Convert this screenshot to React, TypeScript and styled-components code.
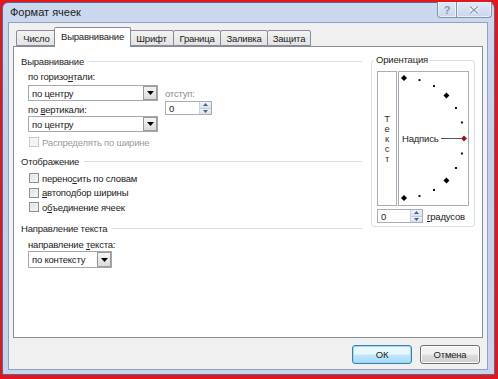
import React from 'react';
import styled, { createGlobalStyle } from 'styled-components';

const Global = createGlobalStyle`
  html, body { margin: 0; padding: 0; background: #fff; }
  body { font-family: "Liberation Sans", Arial, sans-serif; font-size: 9.5px; letter-spacing: -0.2px; color: #222; }
  * { box-sizing: border-box; }
`;

const Screen = styled.div`
  width: 498px;
  height: 379px;
  background: #e4161c;
  padding: 2px 3px 4px 2px;
  display: flex;
`;

const Window = styled.div`
  flex: 1;
  display: flex;
  flex-direction: column;
  background: linear-gradient(#cbd9f0, #c0cfea 40%, #c6d4ee);
  border: 1px solid #56698a;
  border-radius: 6px 6px 0 0;
  padding: 0 6px 4px 5px;
`;

const TitleBar = styled.div`
  height: 19px;
  display: flex;
  justify-content: space-between;
  align-items: flex-start;
  margin-right: -4px;
`;

const Title = styled.div`
  font-size: 11px;
  letter-spacing: 0;
  line-height: 19px;
  padding-left: 2px;
  color: #1a1a1a;
`;

const CaptionButtons = styled.div`
  display: flex;
  margin-top: -1px;
`;

const CaptionButton = styled.div<{ $w: number; $first?: boolean }>`
  width: ${p => p.$w}px;
  height: 16px;
  display: flex;
  align-items: center;
  justify-content: center;
  border: 1px solid #8093b3;
  border-top: none;
  border-left: ${p => (p.$first ? '1px solid #8093b3' : 'none')};
  border-radius: ${p => (p.$first ? '0 0 0 4px' : '0 0 4px 0')};
  background: linear-gradient(#e2eaf7, #c9d6ec);
  box-shadow: inset 0 0 0 1px rgba(255, 255, 255, 0.6);
  color: #8696b0;
  font-size: 11px;
  font-weight: bold;
`;

const Client = styled.div`
  flex: 1;
  display: flex;
  flex-direction: column;
  background: #f0f0f0;
  border: 1px solid #8ea2c0;
  padding: 4px 4px 0 4px;
`;

const TabRow = styled.div`
  display: flex;
  align-items: flex-end;
  padding-left: 3px;
  height: 19px;
`;

const Tab = styled.div<{ $w: number; $active?: boolean }>`
  width: ${p => p.$w}px;
  height: ${p => (p.$active ? 20 : 16)}px;
  margin: ${p => (p.$active ? '0 -2px -1px -2px' : '0 -1px 0 0')};
  position: relative;
  z-index: ${p => (p.$active ? 2 : 1)};
  border: 1px solid #898c95;
  border-bottom: ${p => (p.$active ? 'none' : '1px solid #898c95')};
  border-radius: 2px 2px 0 0;
  background: ${p => (p.$active ? '#ffffff' : 'linear-gradient(#f3f3f3, #e3e3e3)')};
  display: flex;
  align-items: center;
  justify-content: center;
  padding-bottom: ${p => (p.$active ? 2 : 0)}px;
`;

const Panel = styled.div`
  height: 292px;
  background: #fff;
  border: 1px solid #898c95;
  display: flex;
  padding: 8px 5px 0 6px;
  gap: 9px;
`;

const LeftColumn = styled.div`
  width: 342px;
  display: flex;
  flex-direction: column;
`;

const SectionHeader = styled.div<{ $mt?: number }>`
  display: flex;
  align-items: center;
  height: 12px;
  margin-top: ${p => p.$mt ?? 0}px;
  &::after {
    content: '';
    flex: 1;
    height: 1px;
    background: #d5dfe5;
    margin-left: 5px;
  }
`;

const HeaderText = styled.span`
  padding-left: 1px;
  color: #1e1e1e;
`;

const SectionBody = styled.div`
  padding-left: 8px;
  display: flex;
  flex-direction: column;
`;

const AlignGrid = styled.div`
  display: flex;
  gap: 7px;
`;

const Column = styled.div<{ $w?: number; $pt?: number }>`
  display: flex;
  flex-direction: column;
  width: ${p => (p.$w ? `${p.$w}px` : 'auto')};
  padding-top: ${p => p.$pt ?? 0}px;
`;

const Label = styled.div<{ $mt?: number; $disabled?: boolean }>`
  line-height: 12px;
  height: 12px;
  margin-top: ${p => p.$mt ?? 0}px;
  color: ${p => (p.$disabled ? '#8a8a8a' : '#222')};
  white-space: nowrap;
`;

const SelectBox = styled.div<{ $w: number; $h?: number; $mt?: number }>`
  width: ${p => p.$w}px;
  height: ${p => p.$h ?? 16}px;
  margin-top: ${p => p.$mt ?? 0}px;
  border: 1px solid #a3a8b1;
  background: #fff;
  display: flex;
  align-items: stretch;
`;

const SelectValue = styled.div`
  flex: 1;
  padding-left: 3px;
  display: flex;
  align-items: center;
`;

const DropButton = styled.div`
  width: 14px;
  border: 1px solid #9a9a9a;
  background: linear-gradient(#f5f5f5, #dcdcdc);
  display: flex;
  align-items: center;
  justify-content: center;
`;

const Spinner = styled.div<{ $w: number; $mt?: number }>`
  width: ${p => p.$w}px;
  height: 14px;
  margin-top: ${p => p.$mt ?? 0}px;
  border: 1px solid #abadb3;
  background: #fff;
  display: flex;
`;

const SpinValue = styled.div`
  flex: 1;
  padding-left: 3px;
  display: flex;
  align-items: center;
`;

const SpinButtons = styled.div`
  width: 12px;
  display: flex;
  flex-direction: column;
  border-left: 1px solid #c9d3df;
`;

const SpinHalf = styled.div`
  flex: 1;
  display: flex;
  align-items: center;
  justify-content: center;
  background: linear-gradient(#eef3f9, #d8e2ee);
  & + & { border-top: 1px solid #c0cad8; }
`;

const CheckRow = styled.div<{ $mt?: number; $h?: number; $disabled?: boolean }>`
  display: flex;
  align-items: center;
  gap: 3px;
  height: ${p => p.$h ?? 14}px;
  margin-top: ${p => p.$mt ?? 0}px;
  padding-left: 1px;
  color: ${p => (p.$disabled ? '#9a9a9a' : '#222')};
  white-space: nowrap;
`;

const CheckBox = styled.span<{ $disabled?: boolean }>`
  width: 10px;
  height: 10px;
  flex: none;
  border: 1px solid ${p => (p.$disabled ? '#c8c8c8' : '#8e8f8f')};
  background: ${p => (p.$disabled ? '#f4f4f4' : 'linear-gradient(135deg, #dcdcdc, #fafafa)')};
  box-shadow: inset 0 0 0 1px ${p => (p.$disabled ? '#f7f7f7' : '#f0f0f0')};
`;

const OrientGroup = styled.fieldset`
  width: 104px;
  height: 173px;
  margin: -1px 0 0 0;
  padding: 0 5px 0 5px;
  border: 1px solid #d5dfe5;
  border-radius: 3px;
  display: flex;
  flex-direction: column;
`;

const Legend = styled.legend`
  padding: 0 2px;
  margin-left: -3px;
  line-height: 12px;
  color: #1e1e1e;
`;

const OrientRow = styled.div`
  display: flex;
  gap: 1px;
  margin-top: 5px;
  height: 135px;
`;

const VerticalBox = styled.div`
  width: 20px;
  border: 1px solid #a9adb5;
  display: flex;
  flex-direction: column;
  align-items: center;
  justify-content: center;
  line-height: 10px;
  padding-top: 1px;
  color: #333;
`;

const ArcBox = styled.div`
  width: 71px;
  border: 1px solid #a9adb5;
  display: flex;
`;

const DegreeRow = styled.div`
  display: flex;
  align-items: center;
  gap: 4px;
  margin-top: 3px;
`;

const Footer = styled.div`
  display: flex;
  justify-content: flex-end;
  gap: 8px;
  padding: 7px 3px 0 0;
`;

const DialogButton = styled.div<{ $default?: boolean }>`
  width: 60px;
  height: 19px;
  border: 1px solid ${p => (p.$default ? '#3c7fb1' : '#707070')};
  border-radius: 3px;
  background: ${p => (p.$default ? 'linear-gradient(#eaf6fd 45%, #bee6fd 55%, #a7d9f5)' : 'linear-gradient(#f2f2f2 45%, #ebebeb 50%, #dddddd 55%, #cfcfcf)')};
  box-shadow: inset 0 0 0 1px ${p => (p.$default ? '#96d9f9' : '#fcfcfc')};
  display: flex;
  align-items: center;
  justify-content: center;
`;

const DownArrow = () => (
  <svg width="7" height="4" viewBox="0 0 7 4"><path d="M0 0 H7 L3.5 4 Z" fill="#000" /></svg>
);

const SpinArrow = ({ up }: { up?: boolean }) => (
  <svg width="5" height="3" viewBox="0 0 5 3">
    <path d={up ? 'M0 3 H5 L2.5 0 Z' : 'M0 0 H5 L2.5 3 Z'} fill="#4d6185" />
  </svg>
);

const CloseGlyph = () => (
  <svg width="10" height="8" viewBox="0 0 10 8">
    <path d="M1 0.5 L9 7.5 M9 0.5 L1 7.5" stroke="#fff" strokeWidth="3" />
    <path d="M1 0.5 L9 7.5 M9 0.5 L1 7.5" stroke="#8a9ab5" strokeWidth="1.4" />
  </svg>
);

const Select = ({ value, w, h, mt }: { value: string; w: number; h?: number; mt?: number }) => (
  <SelectBox $w={w} $h={h} $mt={mt}>
    <SelectValue>{value}</SelectValue>
    <DropButton><DownArrow /></DropButton>
  </SelectBox>
);

const Spin = ({ w, mt }: { w: number; mt?: number }) => (
  <Spinner $w={w} $mt={mt}>
    <SpinValue>0</SpinValue>
    <SpinButtons>
      <SpinHalf><SpinArrow up /></SpinHalf>
      <SpinHalf><SpinArrow /></SpinHalf>
    </SpinButtons>
  </Spinner>
);

const Arc = () => {
  const cx = 5;
  const cy = 66;
  const r = 60;
  const small = [75, 60, 30, 15, -15, -30, -60, -75];
  const big = [90, 45, -45, -90];
  const pt = (a: number) => {
    const rad = (a * Math.PI) / 180;
    return [cx + r * Math.cos(rad), cy - r * Math.sin(rad)];
  };
  const diamond = (x: number, y: number, s: number) => `M${x} ${y - s} L${x + s} ${y} L${x} ${y + s} L${x - s} ${y} Z`;
  return (
    <svg width="69" height="133" viewBox="0 0 69 133">
      {small.map(a => {
        const [x, y] = pt(a);
        return <rect key={a} x={x - 1} y={y - 1} width="2" height="2" fill="#111" />;
      })}
      {big.map(a => {
        const [x, y] = pt(a);
        return <path key={a} d={diamond(x, y, 3)} fill="#000" />;
      })}
      <text x="3" y="70" fontSize="9.5" letterSpacing="-0.2" fontFamily="Liberation Sans, Arial, sans-serif" fill="#222">Надпись</text>
      <line x1="42" y1="66.5" x2="62" y2="66.5" stroke="#555" strokeWidth="1" />
      <path d={diamond(65, 66.5, 3)} fill="#8b1a22" />
    </svg>
  );
};

export default function App() {
  return (
    <>
      <Global />
      <Screen>
        <Window>
          <TitleBar>
            <Title>Формат ячеек</Title>
            <CaptionButtons>
              <CaptionButton $w={20} $first>?</CaptionButton>
              <CaptionButton $w={35}><CloseGlyph /></CaptionButton>
            </CaptionButtons>
          </TitleBar>
          <Client>
            <TabRow>
              <Tab $w={41}>Число</Tab>
              <Tab $w={77} $active>Выравнивание</Tab>
              <Tab $w={45}>Шрифт</Tab>
              <Tab $w={48}>Граница</Tab>
              <Tab $w={48}>Заливка</Tab>
              <Tab $w={44}>Защита</Tab>
            </TabRow>
            <Panel>
              <LeftColumn>
                <SectionHeader><HeaderText>Выравнивание</HeaderText></SectionHeader>
                <SectionBody>
                  <AlignGrid>
                    <Column $w={130}>
                      <Label $mt={4}>по горизо<u>н</u>тали:</Label>
                      <Select value="по центру" w={130} mt={2} />
                      <Label $mt={3}>по <u>в</u>ертикали:</Label>
                      <Select value="по центру" w={130} />
                      <CheckRow $mt={3} $disabled>
                        <CheckBox $disabled />
                        <span>Распределять по ширине</span>
                      </CheckRow>
                    </Column>
                    <Column $pt={21}>
                      <Label $disabled>отступ:</Label>
                      <Spin w={47} mt={1} />
                    </Column>
                  </AlignGrid>
                </SectionBody>
                <SectionHeader $mt={6}><HeaderText>Отображение</HeaderText></SectionHeader>
                <SectionBody>
                  <CheckRow $mt={4}><CheckBox /><span>перено<u>с</u>ить по словам</span></CheckRow>
                  <CheckRow $h={15}><CheckBox /><span><u>а</u>втоподбор ширины</span></CheckRow>
                  <CheckRow><CheckBox /><span>о<u>б</u>ъединение ячеек</span></CheckRow>
                </SectionBody>
                <SectionHeader $mt={8}><HeaderText>Направление текста</HeaderText></SectionHeader>
                <SectionBody>
                  <Label $mt={5}>направление <u>т</u>екста:</Label>
                  <Select value="по контексту" w={84} h={17} />
                </SectionBody>
              </LeftColumn>
              <OrientGroup>
                <Legend>Ориентация</Legend>
                <OrientRow>
                  <VerticalBox>
                    <span>Т</span><span>е</span><span>к</span><span>с</span><span>т</span>
                  </VerticalBox>
                  <ArcBox><Arc /></ArcBox>
                </OrientRow>
                <DegreeRow>
                  <Spin w={46} />
                  <span><u>г</u>радусов</span>
                </DegreeRow>
              </OrientGroup>
            </Panel>
            <Footer>
              <DialogButton $default>ОК</DialogButton>
              <DialogButton>Отмена</DialogButton>
            </Footer>
          </Client>
        </Window>
      </Screen>
    </>
  );
}
